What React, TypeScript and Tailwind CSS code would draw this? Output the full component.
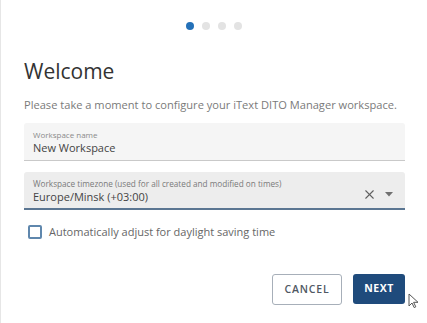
import { X } from 'lucide-react';

export default function App() {
    return (
        <div className="w-[427px] h-[323px] bg-white relative overflow-hidden font-['Open_Sans',sans-serif] border-l border-l-[#e6e6e6]">
            <div className="flex justify-center gap-2 pt-[22px]">
                <span className="w-2 h-2 rounded-full bg-[#2471b8]" />
                <span className="w-2 h-2 rounded-full bg-[#e3e3e3]" />
                <span className="w-2 h-2 rounded-full bg-[#e3e3e3]" />
                <span className="w-2 h-2 rounded-full bg-[#e3e3e3]" />
            </div>

            <div className="px-[23px]">
                <h1 className="mt-[27px] text-[21px] leading-[28px] text-[#333333]">Welcome</h1>
                <p className="mt-[12px] text-[11.1px] leading-[15px] text-[#7a7a7a] whitespace-nowrap">
                    Please take a moment to configure your iText DITO Manager workspace.
                </p>

                <div className="mt-[11px] w-[381px] h-[38px] bg-[#f5f5f5] border-b border-b-[#c9c9c9] rounded-t-[3px] px-[9px] pt-[6px]">
                    <div className="text-[8px] leading-[11px] text-[#8a8a8a]">Workspace name</div>
                    <div className="text-[11px] leading-[16px] text-[#444444]">New Workspace</div>
                </div>

                <div className="mt-[11px] w-[381px] h-[38px] bg-[#ededed] border-b-2 border-b-[#5b7692] rounded-t-[3px] pl-[9px] pr-[12px] pt-[6px] flex items-start">
                    <div className="flex-1">
                        <div className="text-[8.2px] leading-[11px] text-[#7a7a7a] whitespace-nowrap">Workspace timezone (used for all created and modified on times)</div>
                        <div className="text-[11px] leading-[16px] text-[#444444]">Europe/Minsk (+03:00)</div>
                    </div>
                    <div className="flex items-center gap-[8px] mt-[9px] text-[#5f5f5f]">
                        <X size={15} strokeWidth={1.7} />
                        <svg width="8" height="5" viewBox="0 0 8 5"><path d="M0 0h8L4 4.5z" fill="#707070" /></svg>
                    </div>
                </div>

                <label className="mt-[14px] flex items-center gap-[7px] pl-[4px]">
                    <span className="w-[14px] h-[14px] rounded-[2px] border-2 border-[#5f87ad] bg-white" />
                    <span className="text-[11px] leading-[15px] text-[#666666]">Automatically adjust for daylight saving time</span>
                </label>

                <div className="mt-[35px] flex justify-end gap-[11px] w-[381px]">
                    <button className="w-[70px] h-[31px] rounded-[3px] border border-[#a7afb9] bg-white text-[10.5px] font-semibold tracking-[0.08em] text-[#4f5863]">
                        CANCEL
                    </button>
                    <button className="w-[52px] h-[30px] rounded-[3px] bg-[#1f4b7c] text-[10.5px] font-bold tracking-[0.05em] text-white">
                        NEXT
                    </button>
                </div>
            </div>

            <svg className="absolute left-[407px] top-[293px]" width="12" height="16" viewBox="0 0 12 16">
                <path d="M1 1v12l3-3 2.2 4.6 1.6-.8L5.6 9.3H10z" fill="white" stroke="#555" strokeWidth="1" strokeLinejoin="round" />
            </svg>
        </div>
    );
}
